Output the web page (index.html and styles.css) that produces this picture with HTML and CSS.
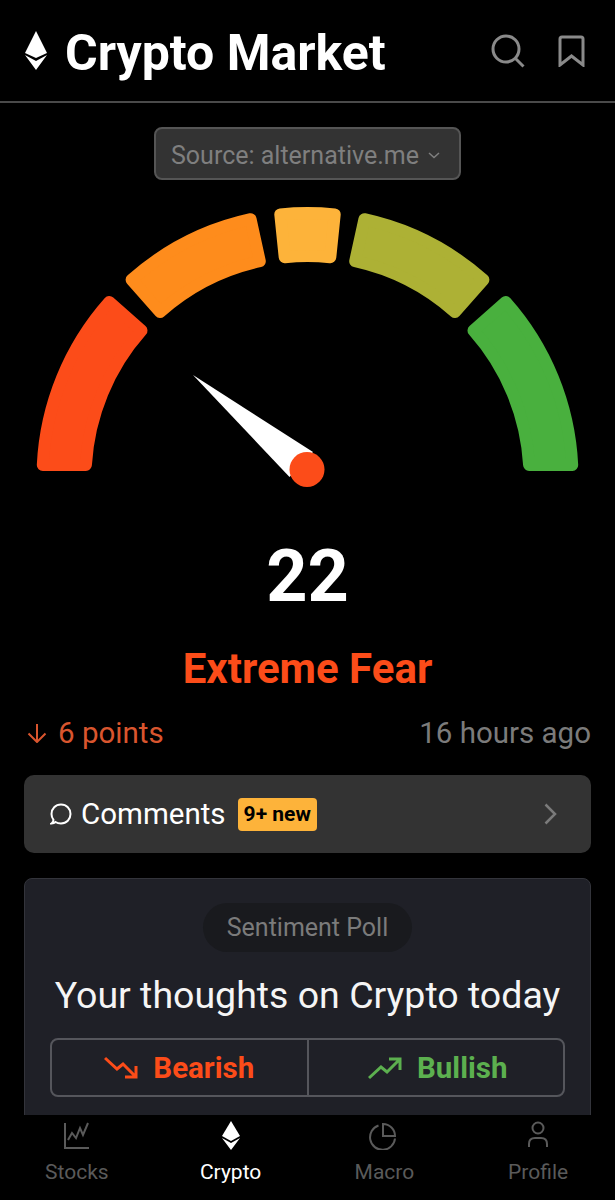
FILE: index.html
```html
<!DOCTYPE html>
<html lang="en">
<head>
  <meta charset="UTF-8">
  <meta name="viewport" content="width=device-width, initial-scale=1.0">
  <title>Crypto Market</title>
  <link rel="stylesheet" href="styles.css">
</head>
<body>
<div class="app">
  <div class="header">
    <svg class="logo" viewBox="0 0 22 39">
      <path d="M11 0 22 22 11 27 0 22Z" fill="#fff"/>
      <path d="M0 24 11 30 22 24 11 39Z" fill="#fff"/>
    </svg>
    <h1>Crypto Market</h1>
    <svg class="head-icon search" viewBox="0 0 34 34">
      <circle cx="15" cy="15" r="13"/>
      <path d="M24.5 24.5 32.5 32.5"/>
    </svg>
    <svg class="head-icon bookmark" viewBox="0 0 27 32">
      <path d="M2 4Q2 2 4 2H23Q25 2 25 4V30L13.5 21 2 30Z"/>
    </svg>
  </div>

  <div class="main">
    <div class="source-wrap">
      <div class="source">Source: alternative.me
        <svg class="source-caret" viewBox="0 0 12 7"><path d="M1 1 6 5.5 11 1"/></svg>
      </div>
    </div>

    <!-- origin of the viewBox is the gauge centre -->
    <svg class="gauge" viewBox="-307.5 -298 615 320">
      <g stroke-width="12" stroke-linejoin="round">
        <path fill="#fc4c19" stroke="#fc4c19" d="M-221.6 -13H-264.7A265 265 0 0 1-198.2 -175.9L-166 -147.4A222 222 0 0 0-221.6 -13Z"/>
        <path fill="#fe8c1c" stroke="#fe8c1c" d="M-147.4 -166-175.9 -198.2A265 265 0 0 1-56.9 -258.8L-47.7 -216.8A222 222 0 0 0-147.4 -166Z"/>
        <path fill="#fdb33a" stroke="#fdb33a" d="M-22.8 -220.8-27.2 -263.6A265 265 0 0 1 27.2 -263.6L22.8 -220.8A222 222 0 0 0-22.8 -220.8Z"/>
        <path fill="#adb135" stroke="#adb135" d="M47.7 -216.8 56.9 -258.8A265 265 0 0 1 175.9 -198.2L147.4 -166A222 222 0 0 0 47.7 -216.8Z"/>
        <path fill="#49b03e" stroke="#49b03e" d="M166 -147.4 198.2 -175.9A265 265 0 0 1 264.7 -13H221.6A222 222 0 0 0 166 -147.4Z"/>
      </g>
      <path fill="#fff" d="M-114.5 -103 5.5 -26-18 -1Z"/>
      <circle cx="-0.5" cy="-8.5" r="17.5" fill="#fc4c19"/>
    </svg>

    <div class="score">22</div>
    <div class="label">Extreme Fear</div>

    <div class="change-row">
      <div class="change">
        <svg class="change-arrow" viewBox="0 0 20 20"><path d="M10 1V19M1.5 10.5 10 19 18.5 10.5"/></svg>
        6 points
      </div>
      <div class="updated">16 hours ago</div>
    </div>

    <div class="comments">
      <svg class="comments-icon" viewBox="0 0 22 22">
        <path d="M1.5 20.5C3.5 20.5 4.5 20 5.5 19 7 20 9 20.5 11 20.5 16.5 20.5 20.5 16.3 20.5 11 20.5 5.7 16.5 1.5 11 1.5 5.5 1.5 1.5 5.7 1.5 11 1.5 13.3 2.3 15.3 3.5 16.8 3.5 18.3 2.8 19.6 1.5 20.5Z"/>
      </svg>
      <span class="comments-text">Comments</span>
      <span class="badge">9+ new</span>
      <svg class="comments-chevron" viewBox="0 0 13 22"><path d="M1.5 1.5 11 11 1.5 20.5"/></svg>
    </div>

    <div class="poll">
      <div class="poll-tag">Sentiment Poll</div>
      <div class="poll-title">Your thoughts on Crypto today</div>
      <div class="poll-buttons">
        <div class="poll-btn bearish">
          <svg viewBox="0 0 34 24"><path d="M1 2 13 13 19 8 32 21M32 10V21H21"/></svg>
          Bearish
        </div>
        <div class="poll-btn bullish">
          <svg viewBox="0 0 34 24"><path d="M1 22 13 11 19 16 32 3M21 3H32V14"/></svg>
          Bullish
        </div>
      </div>
    </div>
  </div>

  <div class="nav">
    <div class="nav-item">
      <svg class="nav-icon" viewBox="0 0 30 30">
        <path d="M3 3V28H27M6 20 10 13 14 18 18 8 21 15 26 3"/>
      </svg>
      Stocks
    </div>
    <div class="nav-item active">
      <svg class="nav-icon" viewBox="0 0 30 30">
        <path class="solid" d="M15 1 24 16 15 21 6 16Z"/>
        <path class="solid" d="M6 18 15 23 24 18 15 30Z"/>
      </svg>
      Crypto
    </div>
    <div class="nav-item">
      <svg class="nav-icon" viewBox="0 0 30 30">
        <path d="M14 4A12 12 0 0 1 26 16H14ZM9.5 5.5A12.5 12.5 0 1 0 26 18.5"/>
      </svg>
      Macro
    </div>
    <div class="nav-item">
      <svg class="nav-icon" viewBox="0 0 30 30">
        <circle cx="15" cy="8" r="5.5"/>
        <path d="M6 27V24Q6 18 12 18H18Q24 18 24 24V27"/>
      </svg>
      Profile
    </div>
  </div>
</div>
</body>
</html>
```

FILE: styles.css
```css
* {
  margin: 0;
  padding: 0;
  box-sizing: border-box;
}

body {
  font-family: Roboto, "Liberation Sans", sans-serif;
  background: #000;
  color: #fff;
}

.app {
  height: 100vh;
  display: flex;
  flex-direction: column;
  overflow: hidden;
}

/* Header */
.header {
  height: 103px;
  flex-shrink: 0;
  display: flex;
  align-items: center;
  padding: 0 30px 0 25px;
  border-bottom: 2px solid #4a4a4a;
}

.logo {
  width: 22px;
  height: 39px;
  margin-right: 18px;
}

.header h1 {
  font-size: 50px;
  font-weight: 700;
  flex-grow: 1;
  margin-top: 4px;
}

.head-icon {
  fill: none;
  stroke: #8a8a8a;
  stroke-width: 3;
}

.search {
  width: 34px;
  height: 34px;
  margin-right: 33px;
}

.bookmark {
  width: 27px;
  height: 32px;
}

/* Main content */
.main {
  flex-grow: 1;
  min-height: 0;
  padding: 24px 24px 0;
  overflow: hidden;
}

.source-wrap {
  display: flex;
  justify-content: center;
}

.source {
  display: flex;
  align-items: center;
  gap: 9px;
  height: 53px;
  padding: 3px 19px 0 15px;
  background: #333;
  border: 2px solid #555;
  border-radius: 8px;
  color: #7f7f7f;
  font-size: 25px;
}

.source-caret {
  width: 12px;
  height: 7px;
  fill: none;
  stroke: #7f7f7f;
  stroke-width: 1.5;
}

.gauge {
  display: block;
  width: 615px;
  height: 320px;
  margin: 0 -24px;
}

.score {
  margin-top: 36px;
  text-align: center;
  font-size: 72px;
  font-weight: 700;
  line-height: 82px;
}

.label {
  margin-top: 29px;
  text-align: center;
  font-size: 42px;
  font-weight: 700;
  line-height: 44px;
  color: #fc4c19;
}

.change-row {
  display: flex;
  justify-content: space-between;
  align-items: center;
  margin-top: 22px;
  font-size: 29.5px;
  line-height: 40px;
}

.change {
  display: flex;
  align-items: center;
  gap: 11px;
  padding-left: 3px;
  color: #d9552e;
}

.change-arrow {
  width: 20px;
  height: 20px;
  fill: none;
  stroke: #d9552e;
  stroke-width: 2;
}

.updated {
  color: #7b7b7b;
}

/* Comments */
.comments {
  display: flex;
  align-items: center;
  height: 78px;
  margin-top: 22px;
  padding: 0 34px 0 26px;
  background: #333;
  border-radius: 10px;
}

.comments-icon {
  width: 22px;
  height: 22px;
  fill: none;
  stroke: #fff;
  stroke-width: 2;
  margin-right: 9px;
}

.comments-text {
  font-size: 29.5px;
}

.badge {
  margin-left: 12px;
  padding: 0 6px;
  height: 33px;
  line-height: 33px;
  background: #fdb33a;
  border-radius: 4px;
  color: #000;
  font-size: 21px;
  font-weight: 700;
}

.comments-chevron {
  width: 13px;
  height: 22px;
  margin-left: auto;
  fill: none;
  stroke: #7b7b7b;
  stroke-width: 2.5;
}

/* Poll */
.poll {
  margin-top: 25px;
  padding: 24px 25px 40px;
  background: #1f2027;
  border: 1px solid #33343b;
  border-radius: 8px 8px 0 0;
}

.poll-tag {
  width: 209px;
  height: 49px;
  margin: 0 auto;
  line-height: 49px;
  text-align: center;
  background: #191a1e;
  border-radius: 25px;
  color: #7b7b7b;
  font-size: 25px;
}

.poll-title {
  margin-top: 20px;
  text-align: center;
  font-size: 37.5px;
  line-height: 46px;
  color: #f5f5f5;
}

.poll-buttons {
  display: flex;
  height: 59px;
  margin-top: 20px;
  border: 2px solid #55565c;
  border-radius: 8px;
}

.poll-btn {
  flex: 1;
  display: flex;
  align-items: center;
  justify-content: center;
  gap: 15px;
  padding-top: 1px;
  font-size: 29.5px;
  font-weight: 700;
}

.poll-btn svg {
  width: 34px;
  height: 24px;
  fill: none;
  stroke-width: 3;
}

.bearish {
  color: #fc4c19;
  border-right: 2px solid #55565c;
}

.bearish svg {
  stroke: #fc4c19;
}

.bullish {
  color: #5cb04f;
}

.bullish svg {
  margin-left: 4px;
  stroke: #5cb04f;
}

/* Bottom nav */
.nav {
  flex-shrink: 0;
  height: 85px;
  display: flex;
  background: #000;
}

.nav-item {
  flex: 1;
  display: flex;
  flex-direction: column;
  align-items: center;
  padding-top: 5px;
  gap: 10px;
  font-size: 21px;
  color: #5a5a5a;
}

.nav-icon {
  width: 30px;
  height: 30px;
  fill: none;
  stroke: #5a5a5a;
  stroke-width: 2;
}

.nav-item.active {
  color: #fff;
}

.nav-icon .solid {
  fill: #fff;
  stroke: none;
}
```
